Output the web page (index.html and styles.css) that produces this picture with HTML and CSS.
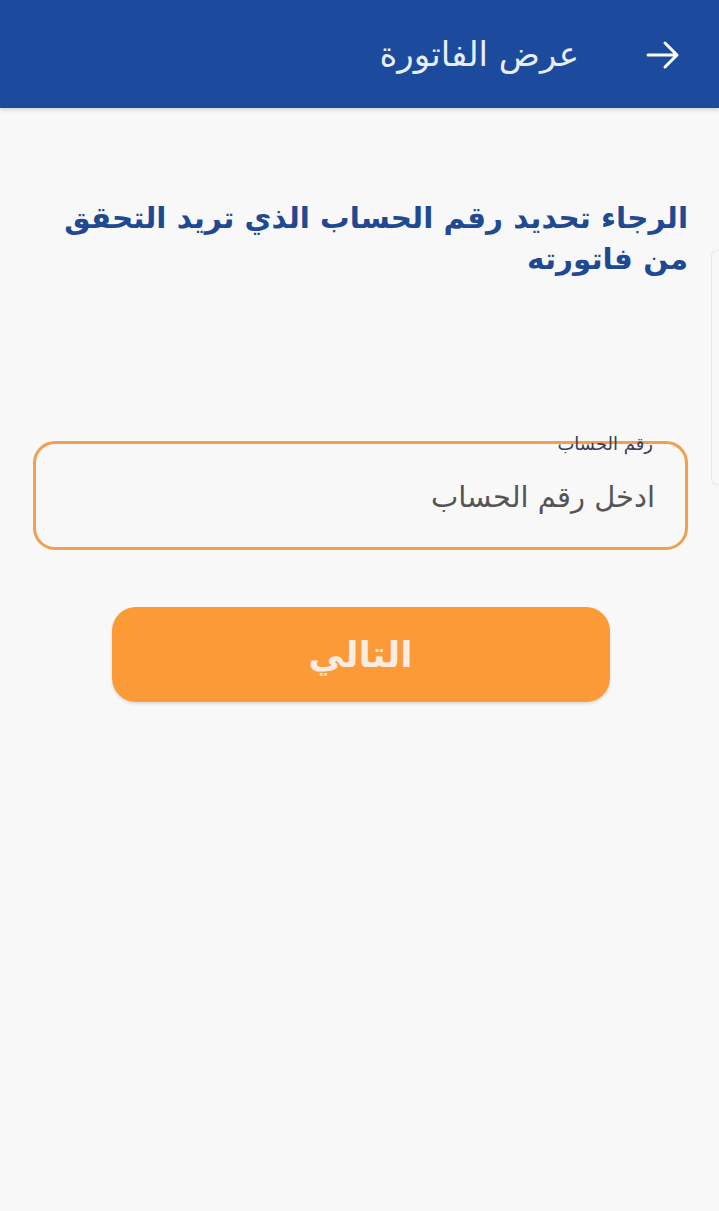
FILE: index.html
```html
<!DOCTYPE html>
<html lang="ar" dir="rtl">
<head>
<meta charset="utf-8">
<link rel="stylesheet" href="styles.css">
</head>
<body>
<header class="topbar">
  <svg class="back" width="36" height="30" viewBox="0 0 36 30" aria-hidden="true">
    <path d="M3 15 H32 M20 3 L32 15 L20 27" fill="none" stroke="#fff" stroke-width="3" stroke-linecap="round" stroke-linejoin="round"/>
  </svg>
  <h1 class="title">عرض الفاتورة</h1>
</header>
<main class="content">
  <p class="prompt">الرجاء تحديد رقم الحساب الذي تريد التحقق من فاتورته</p>
  <div class="field">
    <span class="label">رقم الحساب</span>
    <span class="placeholder">ادخل رقم الحساب</span>
  </div>
  <button class="next">التالي</button>
</main>
<div class="edge-handle"></div>
</body>
</html>
```
FILE: styles.css
```css
html, body {
  margin: 0;
  padding: 0;
}
body {
  background: #f8f8f8;
  font-family: "DejaVu Sans", "Noto Sans", sans-serif;
  width: 719px;
  height: 1211px;
  overflow: hidden;
  position: relative;
}
.topbar {
  height: 108px;
  background: #1c4a9c;
  display: flex;
  align-items: center;
  padding: 0 38px 0 0;
  gap: 66px;
  box-shadow: 0 2px 4px rgba(0,0,0,0.15);
}
.back {
  display: block;
  margin-top: 2px;
}
.title {
  margin: 0;
  color: #e8eef8;
  font-size: 34px;
  font-weight: normal;
  letter-spacing: -0.5px;
}
.content {
  padding: 90px 31px 0 33px;
  display: flex;
  flex-direction: column;
}
.prompt {
  margin: 0;
  color: #1f4a93;
  font-size: 29.5px;
  font-weight: bold;
  line-height: 41px;
  letter-spacing: -0.4px;
}
.field {
  margin-top: 161px;
  height: 103px;
  border: 3px solid #f0a04e;
  border-radius: 22px;
  position: relative;
  display: flex;
  align-items: center;
  padding-right: 30px;
}
.label {
  position: absolute;
  top: -11px;
  right: 32px;
  font-size: 18px;
  color: #3a3f55;
}
.placeholder {
  font-size: 29px;
  color: #555;
  margin-top: 2px;
  letter-spacing: -0.3px;
}
.next {
  margin: 57px auto 0 auto;
  width: 498px;
  height: 95px;
  border: none;
  border-radius: 24px;
  background: #fc9a38;
  color: #fbece0;
  font-family: "DejaVu Sans", sans-serif;
  font-size: 36px;
  font-weight: bold;
  box-shadow: 0 2px 3px rgba(0,0,0,0.12);
}
.edge-handle {
  position: absolute;
  right: 0;
  top: 250px;
  width: 7px;
  height: 233px;
  border: 1px solid #e8e8e8;
  border-right: none;
  border-radius: 6px 0 0 6px;
}
```
